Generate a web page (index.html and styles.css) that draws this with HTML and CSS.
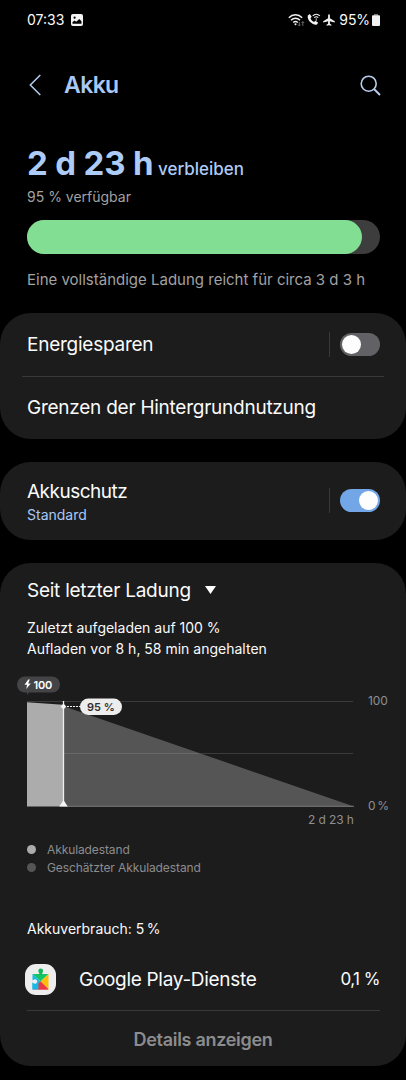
FILE: index.html
```html
<!DOCTYPE html>
<html lang="de">
<head>
  <meta charset="UTF-8" />
  <meta name="viewport" content="width=device-width, initial-scale=1" />
  <title>Akku</title>
  <link rel="stylesheet" href="styles.css">
</head>
<body>
  <div class="status-bar">
    <span class="clock">07:33</span>
    <svg class="status-picture" width="12" height="12" viewBox="0 0 12 12">
      <rect width="12" height="12" rx="2" fill="#f5f5f5"/>
      <circle cx="3.6" cy="3.7" r="1.1" fill="#000"/>
      <path d="M1.5 9.8V8l2.1-1.6 1.6 1.3L8.3 5l2.2 2.3v2.5z" fill="#000"/>
    </svg>
    <div class="status-icons">
      <svg width="17" height="14" viewBox="0 0 17 14" fill="none" stroke="#f2f2f2" stroke-width="1.4">
        <path d="M.8 4.8C4.7.8 10.3.8 14.200 4.800"/>
        <path d="M3 7.300C5.700 4.600 9.300 4.600 12 7.300"/>
        <path d="M5.200 9.500c1.400-1.300 3.200-1.300 4.600 0"/>
        <circle cx="7.500" cy="11.300" r="1" fill="#f2f2f2" stroke="none"/>
        <path d="M11.300 9v3.800M10 11.600l1.300 1.300 1.300-1.300M14.800 12.800V8.600M13.500 9.900l1.300-1.300 1.300 1.300" stroke="#777" stroke-width=".9"/>
      </svg>
      <svg width="14" height="13" viewBox="0 0 14 13">
        <path d="M.8 2.400 2.800.9l1.900 2.900-1.200 1.500c.7 1.700 1.800 2.900 3.500 3.700l1.400-1.200 2.800 1.900-1.300 1.700c-1.100.6-3.300.4-5.400-1.300C1.700 8.200.1 4.900.8 2.400z" fill="#f2f2f2"/>
        <path d="M5.700 2.900c2.100-2.100 5.100-2.100 7.200 0M7.300 4.700c1.200-1.100 2.800-1.100 4 0" fill="none" stroke="#f2f2f2" stroke-width="1.100"/>
        <path d="M9.300 5.200v2.600" stroke="#aaa" stroke-width="1.200"/>
      </svg>
      <svg class="plane" width="12" height="12" viewBox="0 0 12 12" fill="#f2f2f2">
        <path d="M6 .2c.6 0 .9.7.9 1.500v2.600l4.900 3v1.300L6.900 7.200v2.500l1.500 1.100v1L6 11.200l-2.400.6v-1l1.500-1.100V7.200L.2 8.600V7.300l4.900-3V1.700C5.100.9 5.400.2 6 .2z"/>
      </svg>
      <span class="percent">95%</span>
      <svg width="8" height="12" viewBox="0 0 8 12" fill="#f2f2f2">
        <rect x="2" width="4" height="1.500" fill="#777"/>
        <rect y="1.200" width="8" height="10.800" rx="1"/>
      </svg>
    </div>
  </div>

  <header class="header">
    <svg class="back" width="12" height="22" viewBox="0 0 12 22" fill="none" stroke="#b3cdf2" stroke-width="1.500">
      <path d="M11.300 1 1.300 11l10 10"/>
    </svg>
    <h1>Akku</h1>
    <svg class="search" width="21" height="21" viewBox="0 0 21 21" fill="none" stroke="#b9cdec" stroke-width="1.600">
      <circle cx="8.700" cy="8.700" r="7.500"/>
      <path d="M14 14l6 6" stroke-width="2"/>
    </svg>
  </header>

  <section class="summary">
    <div class="remaining"><strong>2 d 23 h</strong> <span>verbleiben</span></div>
    <p class="available">95 % verfügbar</p>
    <div class="battery"><div class="battery-level" style="width: 95%"></div></div>
    <p class="full-charge">Eine vollständige Ladung reicht für circa 3 d 3 h</p>
  </section>

  <div class="card">
    <div class="row row-saver">
      <span class="row-title saver">Energiesparen</span>
      <div class="switch"></div>
    </div>
    <div class="row row-limits">
      <span class="row-title limits">Grenzen der Hintergrundnutzung</span>
    </div>
  </div>

  <div class="card">
    <div class="row row-protect">
      <div>
        <div class="row-title protect">Akkuschutz</div>
        <div class="row-value">Standard</div>
      </div>
      <div class="switch on"></div>
    </div>
  </div>

  <div class="card usage">
    <div class="period">
      <span>Seit letzter Ladung</span>
      <svg width="11" height="8" viewBox="0 0 11 8"><path d="M0 0h11L5.500 8z" fill="#fff"/></svg>
    </div>
    <p class="charged">Zuletzt aufgeladen auf 100 %</p>
    <p class="stopped">Aufladen vor 8 h, 58 min angehalten</p>

    <!-- Battery history -->
    <svg class="chart" width="406" height="160" viewBox="0 670 406 160">
      <path d="M27 701.500h326M63 753.500h290" stroke="#3b3b3b"/>
      <path d="M63 706l291 100.500H63z" fill="#555"/>
      <path d="M63 753.500h136" stroke="#686868"/>
      <path d="M63 806.300h291" stroke="#777"/>
      <path d="M27 702.300l36 2.500V806.500H27z" fill="#acacac"/>
      <path d="M63.500 701v105" stroke="#f0f0f0" stroke-width="1.300"/>
      <path d="M63.500 703.500l2.800 3-2.800 3-2.800-3z" fill="#f5f5f5"/>
      <path d="M59.300 806.500l4.200-6.500 4.200 6.500z" fill="#f5f5f5"/>
      <path d="M67 706.500h14" stroke="#eee" stroke-dasharray="2 1"/>
      <path d="M27 690v5l4-5z" fill="#444446"/>
      <rect x="17" y="676.500" width="43" height="16" rx="8" fill="#444446"/>
      <path d="M28.300 679.500l-3.800 5.200h2.600l-.9 4.300 4.600-5.600h-2.700l1.700-3.900z" fill="#fff"/>
      <text class="badge-full" x="33.500" y="688.500">100</text>
      <rect x="80" y="698.500" width="42" height="16.500" rx="8.200" fill="#ededee"/>
      <text class="badge-now" x="87" y="711">95 %</text>
      <text class="axis" x="368" y="705">100</text>
      <text class="axis zero" x="368" y="810">0 %</text>
      <text class="axis" x="308" y="824">2 d 23 h</text>
    </svg>

    <ul class="legend">
      <li><i class="dot"></i><span class="level">Akkuladestand</span></li>
      <li><i class="dot estimated"></i><span class="estimate">Geschätzter Akkuladestand</span></li>
    </ul>

    <p class="consumption">Akkuverbrauch: 5&#8201;%</p>
    <div class="app">
      <svg width="31" height="31" viewBox="0 0 31 31">
        <rect width="31" height="31" rx="11" fill="#eeeeef"/>
        <path d="M7.500 10h16L15.500 17.500z" fill="#14c565"/>
        <circle cx="15.700" cy="7" r="2.400" fill="#14b85b"/>
        <path d="M14.200 7h3v4h-3z" fill="#14b85b"/>
        <path d="M7.500 10l8 7.500-8 8z" fill="#18b7e4"/>
        <path d="M23.500 10v15.500l-8-8z" fill="#fdbd0d"/>
        <path d="M7.500 25.500l8-8 8 8z" fill="#ed3745"/>
        <path d="M7.500 25.500V17.500h8l-2 8z" fill="#18b7e4"/>
        <path d="M13.500 25.500v-6l2-2 8 8z" fill="#ed3745"/>
        <circle cx="10" cy="17.500" r="2.200" fill="#eeeeef"/>
        <path d="M7 16.300h3v2.400H7z" fill="#eeeeef"/>
      </svg>
      <span class="app-name">Google Play-Dienste</span>
      <span class="app-usage">0,1 %</span>
    </div>
    <div class="details">Details anzeigen</div>
  </div>
</body>
</html>
```

FILE: styles.css
```css
* {
  box-sizing: border-box;
}

body {
  margin: 0;
  height: 1080px;
  overflow: hidden;
  background: #000;
  color: #fafafa;
  font-family: 'Inter', sans-serif;
}

h1, p, ul {
  margin: 0;
  padding: 0;
  font-weight: 400;
}

svg {
  flex: none;
}

.status-bar {
  display: flex;
  align-items: center;
  height: 39px;
  padding: 0 26px 0 27px;
  font-size: 14px;
}

.status-picture {
  margin-left: 7px;
}

.status-icons {
  display: flex;
  align-items: center;
  gap: 2px;
  margin-left: auto;
}

.plane {
  margin-right: 2px;
}

.percent {
  letter-spacing: -0.1px;
}

.header {
  display: flex;
  align-items: center;
  height: 92px;
  padding: 0 25px 0 29px;
}

.header h1 {
  margin-left: 23px;
  font-size: 23px;
  font-weight: 600;
  letter-spacing: -0.6px;
  color: #a9c8f5;
}

.search {
  margin-left: auto;
}

.summary {
  height: 181.500px;
  padding: 12px 26px 0 27px;
  color: #a2a2a2;
}

.remaining {
  height: 42px;
  line-height: 41px;
  color: #adcbf7;
  white-space: nowrap;
}

.remaining strong {
  font-size: 33px;
  font-weight: 700;
  letter-spacing: -0.15px;
}

.remaining span {
  font-size: 17px;
  font-weight: 500;
}

.available {
  height: 35px;
  line-height: 24px;
  font-size: 14px;
}

.battery {
  height: 34px;
  border-radius: 17px;
  background: #3d3d3e;
}

.battery-level {
  height: 100%;
  border-radius: 17px;
  background: #82de93;
}

.full-charge {
  margin-top: 15px;
  line-height: 22px;
  font-size: 15px;
  white-space: nowrap;
}

.card {
  margin-bottom: 23px;
  border-radius: 31px;
  background: #1c1c1d;
}

.row {
  display: flex;
  align-items: center;
  justify-content: space-between;
  padding: 0 26px 0 27px;
}

.row-saver {
  height: 63px;
}

.row-limits {
  height: 63px;
  margin: 0 22px;
  padding: 0 5px;
  border-top: 1px solid #39393a;
}

.row-protect {
  height: 78.500px;
}

.row-title {
  padding-top: 1px;
  font-size: 19px;
  line-height: 24px;
  letter-spacing: -0.25px;
  white-space: nowrap;
}

.row-title.protect {
  padding-top: 5px;
  letter-spacing: -0.5px;
}

.row-value {
  font-size: 14px;
  line-height: 22px;
  color: #a9c8f5;
}

.switch {
  position: relative;
  width: 40px;
  height: 23px;
  border-radius: 12px;
  background: #626266;
}

.switch::before {
  content: '';
  position: absolute;
  left: -11px;
  top: -1px;
  width: 1px;
  height: 25px;
  background: #39393a;
}

.switch::after {
  content: '';
  position: absolute;
  left: 2px;
  top: 2px;
  width: 19px;
  height: 19px;
  border-radius: 50%;
  background: #fdfdfd;
}

.switch.on {
  background: #73a6e6;
}

.switch.on::after {
  left: 19px;
}

.usage {
  height: 502.500px;
  margin-bottom: 0;
}

.period {
  display: flex;
  align-items: center;
  gap: 14px;
  height: 54px;
  padding-left: 27px;
  font-size: 19px;
  letter-spacing: -0.25px;
}

.charged, .stopped {
  height: 21px;
  line-height: 21px;
  padding-left: 27px;
  font-size: 14px;
}

.chart {
  display: block;
  margin-top: 11px;
}

.chart text {
  font-size: 12px;
  fill: #8f8f92;
}

.chart .axis {
  letter-spacing: -0.1px;
}

.chart .zero {
  letter-spacing: -0.9px;
}

.chart .badge-full {
  font-size: 11px;
  font-weight: 600;
  letter-spacing: -0.2px;
  fill: #fff;
}

.chart .badge-now {
  font-size: 11px;
  font-weight: 600;
  fill: #303033;
}

.legend {
  padding: 11px 27px 0;
  list-style: none;
  font-size: 12px;
  letter-spacing: -0.1px;
  color: #8c8c8e;
}

.legend li {
  display: flex;
  align-items: center;
  gap: 11px;
  height: 17.5px;
}

.dot {
  width: 9px;
  height: 9px;
  border-radius: 50%;
  background: #acacac;
}

.dot.estimated {
  background: #555;
}

.consumption {
  height: 20px;
  margin-top: 43px;
  padding-left: 27px;
  line-height: 20px;
  font-size: 14px;
}

.app {
  display: flex;
  align-items: center;
  height: 72px;
  margin: 0 26px 0 27px;
  padding-top: 9px;
  border-bottom: 1px solid #39393a;
}

.app svg {
  margin-left: -2px;
}

.app-name {
  margin-left: 23px;
  font-size: 19px;
  letter-spacing: -0.3px;
}

.app-usage {
  margin-left: auto;
  font-size: 17px;
  letter-spacing: -0.5px;
}

.details {
  height: 55px;
  line-height: 57px;
  text-align: center;
  font-size: 18px;
  font-weight: 600;
  letter-spacing: -0.3px;
  color: #8c8c8e;
}
```
